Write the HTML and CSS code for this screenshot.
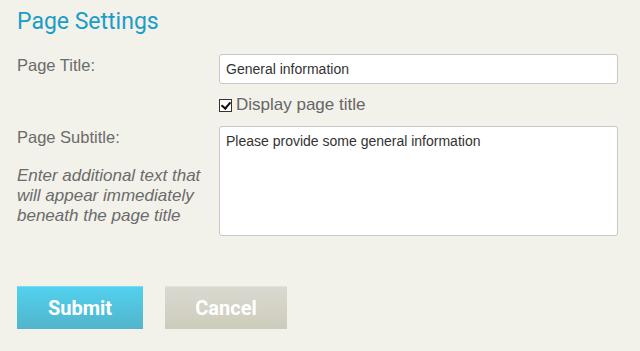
FILE: index.html
```html
<!DOCTYPE html>
<html lang="en">
<head>
    <meta charset="UTF-8">
    <title>Page Settings</title>
    <link rel="stylesheet" href="styles.css">
</head>
<body>
    <div id="settings">
        <h1>Page Settings</h1>

        <div class="row">
            <label class="label" for="title">Page Title:</label>
            <div class="field">
                <input id="title" class="text-input" type="text" value="General information">
                <label class="check"><input type="checkbox" checked> Display page title</label>
            </div>
        </div>

        <div class="row row-sub">
            <div class="label">
                <label for="subtitle">Page Subtitle:</label>
                <p class="hint">Enter additional text that will appear immediately beneath the page title</p>
            </div>
            <div class="field">
                <textarea id="subtitle" class="text-area">Please provide some general information</textarea>
            </div>
        </div>

        <div class="buttons">
            <button class="btn btn-submit">Submit</button>
            <button class="btn btn-cancel">Cancel</button>
        </div>
    </div>
</body>
</html>
```

FILE: styles.css
```css
html, body{
    margin: 0;
    padding: 0;
    background-color: #f2f1ea;
}

#settings{
    padding: 6px 22px 0 17px;
    font-family: 'Liberation Sans', Arial, sans-serif;
    color: #6b6b6b;
}

h1{
    margin: 0;
    font-family: 'Roboto', sans-serif;
    font-size: 23px;
    font-weight: 400;
    color: #1a9dc8;
    line-height: 32px;
}

.row{
    display: flex;
    margin-top: 16px;
}

.row-sub{
    margin-top: 10px;
}

.label{
    width: 202px;
    font-size: 16.5px;
    line-height: 18px;
    padding-top: 2px;
}

.hint{
    margin: 20px 0 0 0;
    width: 190px;
    font-style: italic;
    font-size: 17px;
    line-height: 20px;
}

.field{
    flex: 1;
    display: flex;
    flex-direction: column;
}

.text-input, .text-area{
    box-sizing: border-box;
    width: 399px;
    border: 1px solid #c8c8c8;
    border-radius: 3px;
    background-color: #fff;
    font-family: 'Liberation Sans', Arial, sans-serif;
    font-size: 14px;
    color: #333;
    padding: 0 6px;
    margin: 0;
}

.text-input{
    height: 30px;
}

.text-area{
    height: 110px;
    padding-top: 6px;
    resize: none;
}

.check{
    display: flex;
    align-items: center;
    gap: 4px;
    margin-top: 10px;
    font-size: 17px;
    line-height: 22px;
    color: #666;
}

.check input{
    appearance: none;
    position: relative;
    box-sizing: border-box;
    margin: 0;
    width: 13px;
    height: 13px;
    border: 1px solid #333;
    background-color: #fff;
}

.check input:checked::after{
    content: "";
    position: absolute;
    left: 3px;
    top: 0px;
    width: 4px;
    height: 7px;
    border-right: 2px solid #111;
    border-bottom: 2px solid #111;
    transform: rotate(40deg);
}

.buttons{
    display: flex;
    gap: 22px;
    margin-top: 50px;
}

.btn{
    height: 43px;
    border: 0;
    border-radius: 0;
    font-family: 'Roboto', sans-serif;
    font-size: 20px;
    font-weight: bold;
    color: #fff;
}

.btn-submit{
    width: 126px;
    background: linear-gradient(#52d1ee, #52b4cc);
    border-top: 1px solid #7adcf2;
}

.btn-cancel{
    width: 122px;
    background: linear-gradient(#dad9d1, #cdccbb);
    border-top: 1px solid #e3e2da;
}

.btn:hover{
    cursor: pointer;
}
```
